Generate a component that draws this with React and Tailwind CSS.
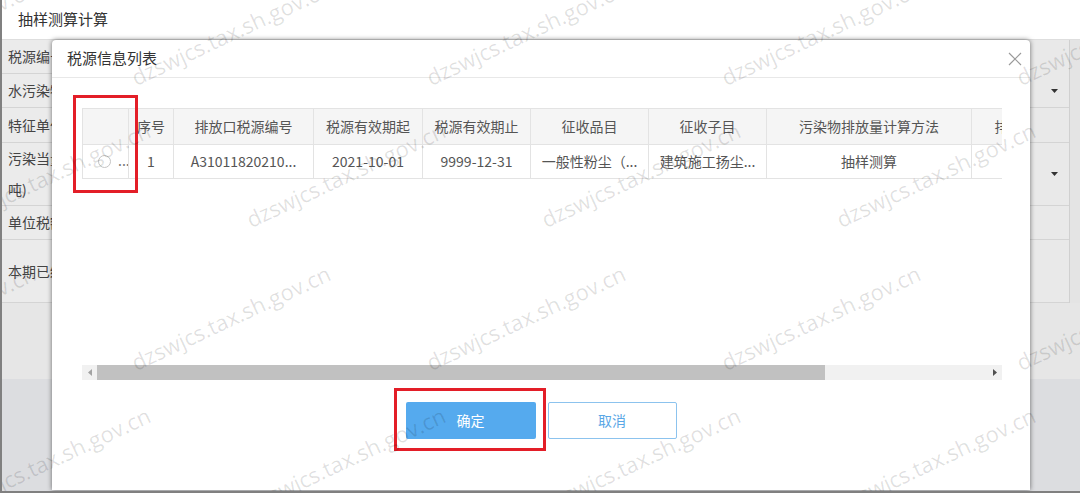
import React from "react";

const formRows = [
  { h: "h-[34px]", lines: ["税源编号"], select: false, right: false },
  { h: "h-[34px]", lines: ["水污染物"], select: true, right: true },
  { h: "h-[35px]", lines: ["特征单位"], select: false, right: true },
  { h: "h-[63px]", lines: ["污染当量值（千克/", "吨)"], select: true, right: true },
  { h: "h-[34px]", lines: ["单位税额"], select: false, right: true },
  { h: "h-[63px]", lines: ["本期已缴税额"], select: false, right: true },
];

const columns = [
  { w: "w-[46px]", title: "" },
  { w: "w-[45px]", title: "序号" },
  { w: "w-[140px]", title: "排放口税源编号" },
  { w: "w-[109px]", title: "税源有效期起" },
  { w: "w-[108px]", title: "税源有效期止" },
  { w: "w-[118px]", title: "征收品目" },
  { w: "w-[118px]", title: "征收子目" },
  { w: "w-[205px]", title: "污染物排放量计算方法" },
  { w: "w-[116px]", title: "排放口名称" },
  { w: "w-[120px]", title: "排放口位置" },
];

const row = ["1", "A31011820210...", "2021-10-01", "9999-12-31", "一般性粉尘（...", "建筑施工扬尘...", "抽样测算", "", ""];

// watermark grid: bottom-left anchor of each text
const marks = [];
[88, 373].forEach((y) => [-160, 135, 430, 725, 1020].forEach((x) => marks.push({ x, y })));
[230, 515].forEach((y) => [-45, 250, 545, 840].forEach((x) => marks.push({ x, y })));

const Caret = () => (
  <svg width="7" height="4" viewBox="0 0 7 4" className="absolute right-[11px] top-1/2 -translate-y-1/2">
    <path d="M0 0h7L3.5 4z" fill="#333" />
  </svg>
);

export default function App() {
  return (
    <div className="relative w-[1080px] h-[493px] overflow-hidden flex flex-col bg-white border-l-2 border-b-2 border-[#808080] font-['Noto_Sans_CJK_SC','Noto_Sans',sans-serif] text-[14px] text-[#444]">
      {/* page header */}
      <div className="h-[40px] shrink-0 flex items-center pl-4 text-[15px] text-[#333] border-b border-[#dedede]">
        抽样测算计算
      </div>

      {/* form behind the dialog */}
      <div className="shrink-0">
        {formRows.map((r, i) => (
          <div key={i} className={`flex ${r.h}`}>
            <div className="w-[160px] shrink-0 bg-[#ebebeb] border-b border-r border-[#d4d4d4] pl-[6px] flex flex-col justify-center leading-[31px]">
              {r.lines.map((l) => (
                <span key={l} className="whitespace-nowrap">{l}</span>
              ))}
            </div>
            <div className={`relative flex-1 bg-[#e9e9e9] border-[#d4d4d4] ${r.right ? "border-b" : ""}`}>
              {r.select && <Caret />}
            </div>
            <div className="w-[11px] shrink-0 bg-[#e4e4e4] border-l border-[#d0d0d0]" />
          </div>
        ))}
      </div>
      <div className="h-[76px] shrink-0 bg-[#e6e6e6]" />
      <div className="flex-1 bg-[#dcdde0]" />

      {/* dialog */}
      <div className="absolute left-[50px] top-[40px] w-[978px] h-[450px] bg-white rounded-t-[4px] shadow-[0_0_5px_rgba(0,0,0,0.55)] flex flex-col">
        <div className="h-[38px] shrink-0 flex items-center justify-between pl-[15px] pr-[8px] border-b border-[#e8e8e8]">
          <span className="text-[15px] text-[#333]">税源信息列表</span>
          <svg width="14" height="14" viewBox="0 0 14 14">
            <path d="M1 1l12 12M13 1L1 13" stroke="#9a9a9a" strokeWidth="1.2" />
          </svg>
        </div>

        <div className="pl-[30px] pt-[30px]">
          <div className="w-[920px] h-[257px] overflow-hidden">
            <table className="table-fixed border-collapse w-[1125px] text-[14px] text-[#555]">
              <thead>
                <tr className="h-[36px] bg-[#f5f5f5]">
                  {columns.map((c, i) => (
                    <th key={i} className={`${c.w} font-normal border border-[#e3e3e3] whitespace-nowrap overflow-hidden`}>
                      {c.title}
                    </th>
                  ))}
                </tr>
              </thead>
              <tbody>
                <tr className="h-[34px]">
                  <td className="border border-[#e3e3e3] overflow-hidden">
                    <div className="flex items-center pl-[15px] gap-[7px] text-[#777]">
                      <span className="block shrink-0 w-[13px] h-[13px] rounded-full border border-[#c4c4c4] bg-white" />
                      <span className="shrink-0 leading-none -mt-[4px]">...</span>
                    </div>
                  </td>
                  {row.map((v, i) => (
                    <td key={i} className="border border-[#e3e3e3] text-center whitespace-nowrap overflow-hidden">
                      {v}
                    </td>
                  ))}
                </tr>
              </tbody>
            </table>
          </div>

          {/* horizontal scrollbar */}
          <div className="w-[920px] h-[15px] flex bg-[#f1f1f1]">
            <div className="w-[15px] h-full flex items-center justify-center">
              <svg width="4" height="7" viewBox="0 0 4 7"><path d="M4 0v7L0 3.5z" fill="#a3a3a3" /></svg>
            </div>
            <div className="w-[728px] h-full bg-[#c1c1c1]" />
            <div className="flex-1" />
            <div className="w-[15px] h-full flex items-center justify-center">
              <svg width="4" height="7" viewBox="0 0 4 7"><path d="M0 0v7L4 3.5z" fill="#505050" /></svg>
            </div>
          </div>
        </div>

        <div className="flex justify-center gap-[12px] pt-[22px]">
          <button className="w-[130px] h-[37px] rounded-[2px] bg-[#55aaee] text-white text-[14px]">确定</button>
          <button className="w-[129px] h-[37px] rounded-[2px] bg-white border border-[#8cc3ee] text-[#5aa7e6] text-[14px]">取消</button>
        </div>
      </div>

      {/* annotation boxes */}
      <div className="absolute left-[71px] top-[95px] w-[65px] h-[98px] border-[3px] border-[#e31e28]" />
      <div className="absolute left-[392px] top-[388px] w-[152px] h-[63px] border-[3px] border-[#e31e28]" />

      {/* watermark */}
      {marks.map((m, i) => (
        <span
          key={i}
          className="absolute pointer-events-none whitespace-nowrap leading-none text-[22px] font-['Open_Sans',sans-serif] text-[rgba(0,0,0,0.12)] origin-bottom-left -rotate-[25deg]"
          style={{ left: m.x, top: m.y - 22 }}
        >
          dzswjcs.tax.sh.gov.cn
        </span>
      ))}
    </div>
  );
}
